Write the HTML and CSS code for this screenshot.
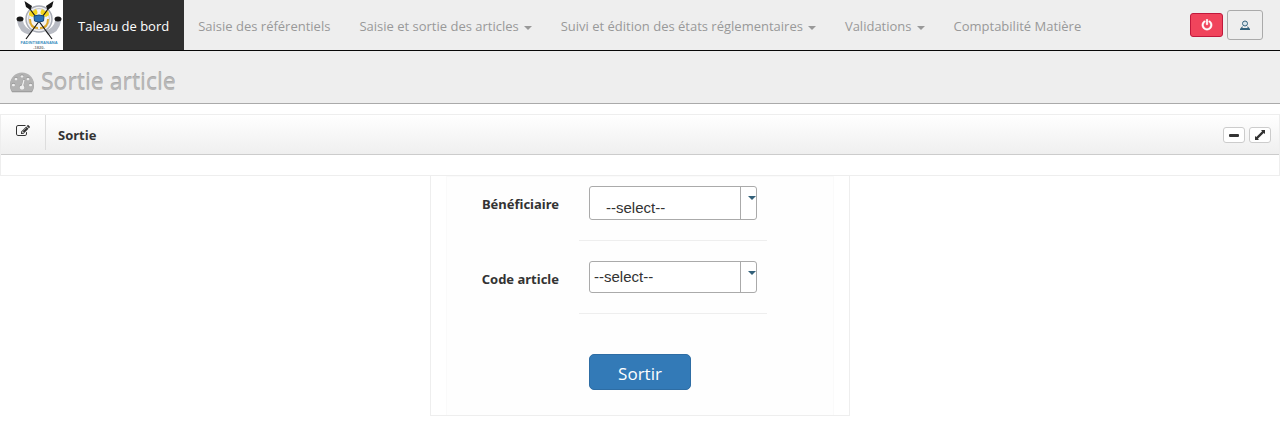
FILE: index.html
```html
<!DOCTYPE html>
<html lang="fr">
<head>
<meta charset="utf-8">
<meta name="viewport" content="width=device-width, initial-scale=1">
<title>Sortie article</title>
<link rel="stylesheet" href="styles.css">
</head>
<body>
<nav class="navbar">
  <a class="brand" href="#" aria-label="Accueil">
    <svg class="logo" viewBox="0 0 48 50" aria-hidden="true">
      <rect width="48" height="50" fill="#fff"/>
      <path d="M2 21Q4 33 15 35L18 31Q9 28 8 21ZM46 21Q44 33 33 35L30 31Q39 28 40 21Z" fill="#b9bcc4"/>
      <circle cx="24" cy="19" r="13" fill="#f2f2f4" stroke="#a9adb6" stroke-width="1.500"/>
      <circle cx="24" cy="19" r="10.500" fill="none" stroke="#c4c6cc"/>
      <path d="M14 15Q14 10 18 11L21 9Q24 13 21 15L17 17ZM34 15Q34 10 30 11L27 9Q24 13 27 15L31 17Z" fill="#f3d51f"/>
      <path d="M15 19Q15 28 23 28M33 19Q33 28 25 28" fill="none" stroke="#dfa928" stroke-width="2"/>
      <path d="M12 5L37 39M36 5L11 39" stroke="#161616" stroke-width="1.200"/>
      <path d="M9.500 1L17 6L15.500 10L11 7ZM38.500 1L31 6L32.500 10L37 7Z" fill="#161616"/>
      <ellipse cx="5" cy="19" rx="3.500" ry="2.500" fill="#1a1a1a"/>
      <ellipse cx="43" cy="19" rx="3.500" ry="2.500" fill="#1a1a1a"/>
      <path d="M19 16Q24 14 29 16L28.500 21Q24 23 19.500 21Z" fill="#2b71b6" stroke="#174777"/>
      <text x="24" y="44" class="logo-name">FADINTSERANANA</text>
      <text x="24" y="49" class="logo-year">-1820-</text>
    </svg>
  </a>
  <ul class="menu">
    <li><a class="menu-link active" href="#">Taleau de bord</a></li>
    <li><a class="menu-link" href="#">Saisie des référentiels</a></li>
    <li><a class="menu-link" href="#">Saisie et sortie des articles<span class="caret"></span></a></li>
    <li><a class="menu-link" href="#">Suivi et édition des états réglementaires<span class="caret"></span></a></li>
    <li><a class="menu-link" href="#">Validations<span class="caret"></span></a></li>
    <li><a class="menu-link" href="#">Comptabilité Matière</a></li>
  </ul>
  <div class="actions">
    <button class="btn-power" type="button" aria-label="Déconnexion">
      <svg class="icon" viewBox="0 0 1792 1792" aria-hidden="true"><path stroke="#fff" stroke-width="60" d="M1664 896q0 156-61 298t-164 245-245 164-298 61-298-61-245-164-164-245-61-298q0-182 80.500-343t226.500-270q43-32 95.500-25t83.500 50q32 42 24.500 94.500t-49.500 84.500q-98 74-151.500 181t-53.500 228q0 104 40.500 198.500t109.500 163.500 163.500 109.500 198.500 40.500 198.500-40.500 163.500-109.500 109.500-163.500 40.500-198.500q0-121-53.500-228t-151.500-181q-42-32-49.500-84.500t24.500-94.500q31-43 84-50t95 25q146 109 226.500 270t80.500 343zm-640-768v640q0 52-38 90t-90 38-90-38-38-90v-640q0-52 38-90t90-38 90 38 38 90z"/></svg>
    </button>
    <button class="btn-user" type="button" aria-label="Profil">
      <svg class="icon" viewBox="0 0 12 12" aria-hidden="true"><circle cx="6" cy="4.500" r="2.500" fill="#d9e5ec" stroke="#33627c"/><path d="M3.500 7L1 10V11H11V10L8.500 7V9H3.500Z" fill="#33627c"/></svg>
    </button>
  </div>
</nav>

<header class="page-head">
  <svg class="gauge" viewBox="0 0 1792 1792" aria-hidden="true"><path d="M384 1152q0-53-37.500-90.500t-90.500-37.500-90.500 37.500-37.500 90.500 37.500 90.500 90.500 37.500 90.500-37.500 37.500-90.500zm192-448q0-53-37.500-90.500t-90.500-37.500-90.500 37.500-37.500 90.500 37.500 90.500 90.500 37.500 90.500-37.500 37.500-90.500zm428 481l101-382q6-26-7.500-48.500t-38.500-29.500-48 6.500-30 39.500l-101 382q-60 5-107 43.500t-63 98.500q-20 77 20 146t117 89 146-20 89-117q16-60-6-117t-72-91zm660-33q0-53-37.500-90.500t-90.500-37.500-90.500 37.500-37.500 90.500 37.500 90.500 90.500 37.500 90.500-37.500 37.500-90.500zm-640-640q0-53-37.500-90.500t-90.500-37.500-90.500 37.500-37.500 90.500 37.500 90.500 90.500 37.500 90.500-37.500 37.500-90.500zm448 192q0-53-37.500-90.500t-90.500-37.500-90.500 37.500-37.500 90.500 37.500 90.500 90.500 37.500 90.500-37.500 37.500-90.500zm320 448q0 261-141 483-19 29-54 29h-1402q-35 0-54-29-141-221-141-483 0-182 71-348t191-286 286-191 348-71 348 71 286 191 191 286 71 348z"/></svg>
  <h1 class="page-title">Sortie article</h1>
</header>

<main>
  <section class="panel">
    <div class="panel-head">
      <span class="panel-icon">
        <svg class="edit" viewBox="0 0 1792 1792" aria-hidden="true"><path d="M888 1184l116-116-152-152-116 116v56h96v96h56zm440-720q-16-16-33 1l-350 350q-17 17-1 33t33-1l350-350q17-17 1-33zm80 594v190q0 119-84.500 203.500t-203.500 84.500h-832q-119 0-203.500-84.500t-84.500-203.500v-832q0-119 84.500-203.500t203.500-84.500h832q63 0 117 25 15 7 18 23 3 17-9 29l-49 49q-14 14-32 8-23-6-45-6h-832q-66 0-113 47t-47 113v832q0 66 47 113t113 47h832q66 0 113-47t47-113v-126q0-13 9-22l64-64q15-15 35-7t20 29zm-96-738l288 288-672 672h-288v-288zm444 132l-92 92-288-288 92-92q28-28 68-28t68 28l152 152q28 28 28 68t-28 68z"/></svg>
      </span>
      <h2 class="panel-title">Sortie</h2>
      <div class="panel-tools">
        <button class="tool" type="button" aria-label="Réduire"><svg class="icon" viewBox="0 0 12 12" aria-hidden="true"><rect x="1" y="5" width="10" height="3" rx="1"/></svg></button>
        <button class="tool" type="button" aria-label="Agrandir"><svg class="icon" viewBox="0 0 12 12" aria-hidden="true"><path d="M11 1V5L9.700 3.900L3.900 9.700L5 11H1V7L2.300 8.100L8.100 2.300L7 1Z"/></svg></button>
      </div>
    </div>
    <div class="panel-body"></div>
  </section>

  <form class="card">
    <div class="card-inner">
      <div class="row">
        <label class="label" for="beneficiaire">Bénéficiaire</label>
        <div class="field">
          <span class="combo"><select class="select tall" id="beneficiaire"><option>--select--</option></select></span>
        </div>
      </div>
      <div class="row">
        <label class="label" for="article">Code article</label>
        <div class="field">
          <span class="combo"><select class="select" id="article"><option>--select--</option></select></span>
        </div>
      </div>
      <div class="submit-row">
        <button class="submit" type="submit">Sortir</button>
      </div>
    </div>
  </form>
</main>
</body>
</html>
```

FILE: styles.css
```css
* { box-sizing: border-box; }

body {
  margin: 0;
  background: #fff;
  color: #333;
  font: 13px/20px "Open Sans", "Noto Sans", sans-serif;
}

.icon { display: block; width: 12px; height: 12px; fill: currentColor; }

.navbar {
  display: flex;
  padding: 0 17px 0 15px;
  background: #eee;
  border-bottom: 1px solid #080808;
}
.brand, .logo { display: block; width: 48px; height: 50px; }
.logo-name, .logo-year {
  font-family: "Liberation Sans", sans-serif;
  font-weight: bold;
  text-anchor: middle;
}
.logo-name { font-size: 4px; fill: #3f8fc0; }
.logo-year { font-size: 4px; fill: #777; }

.menu { display: flex; margin: 0; padding: 0; list-style: none; }
.menu-link {
  display: flex;
  align-items: center;
  gap: 5px;
  padding: 16px 15px 14px 14px;
  color: #999;
  text-decoration: none;
  white-space: nowrap;
}
.menu-link.active { padding: 16px 15px 14px; background: #2f2f2f; color: #fff; }
.caret {
  margin-top: 3px;
  border: 4px solid transparent;
  border-top-color: currentColor;
  border-bottom: 0;
}

.actions { display: flex; align-items: center; gap: 4px; margin-left: auto; }
.btn-power, .btn-user {
  display: flex;
  align-items: center;
  justify-content: center;
  padding: 0;
  border-radius: 3px;
}
.btn-power { width: 33px; height: 24px; background: #f0445c; border: 1px solid #c0183c; color: #fff; }
.btn-user { width: 36px; height: 30px; background: #eee; border: 1px solid #aaa; }

.page-head {
  display: flex;
  align-items: center;
  gap: 7px;
  padding: 13px 10px 5px;
  background: #eee;
  border-bottom: 1px solid #aaa;
}
.gauge { width: 24px; height: 24px; fill: #b3b3b3; filter: drop-shadow(0 1px 0 #999); }
.page-title {
  margin: 0;
  color: #b8b8b8;
  font-size: 23px;
  font-weight: 400;
  line-height: 34px;
  text-shadow: 0 -1px 0 #aaa;
}

.panel { margin-top: 10px; border: 1px solid #eee; }
.panel-head {
  display: flex;
  height: 40px;
  background: linear-gradient(#fff, #efefef);
  border-bottom: 1px solid #ccc;
}
.panel-icon { width: 45px; height: 35px; padding: 9px 15px; border-right: 1px solid #ddd; }
.edit { display: block; width: 14px; height: 14px; fill: #333; }
.panel-title { margin: 0; padding: 0 12px; font-size: 13px; line-height: 40px; }
.panel-tools { display: flex; align-items: center; gap: 4px; margin-left: auto; padding-right: 8px; }
.tool {
  display: flex;
  align-items: center;
  justify-content: center;
  width: 22px;
  height: 16px;
  padding: 0;
  background: #fff;
  border: 1px solid #ccc;
  border-radius: 3px;
  color: #333;
}
.panel-body { height: 20px; }

.card {
  max-width: 420px;
  margin: 0 auto;
  padding: 0 15px;
  border: 1px solid #eee;
  border-top: 0;
}
.card-inner { background: #fefefe; border: 1px solid #fafafa; border-bottom: 0; }
.row { display: grid; grid-template-columns: 112px 188px; column-gap: 20px; }
.label {
  padding-top: 17px;
  font-family: "Noto Sans", "Open Sans", sans-serif;
  font-weight: 700;
  text-align: right;
}
.field { height: 64px; padding: 9px 10px 0; border-bottom: 1px solid #eee; }
.row + .row .field { height: 73px; padding-top: 20px; }
.row + .row .label { padding-top: 28px; }

.combo { position: relative; display: block; }
.combo::before {
  content: "";
  position: absolute;
  top: 0;
  right: 16px;
  bottom: 0;
  border-left: 1px solid #aaa;
  pointer-events: none;
}
.combo::after {
  content: "";
  position: absolute;
  top: 10px;
  right: 1px;
  border: 4px solid transparent;
  border-top-color: #336079;
  border-bottom: 0;
  pointer-events: none;
}
.select {
  display: block;
  width: 100%;
  height: 32px;
  padding: 0 20px 0 4px;
  appearance: none;
  background: #fff;
  border: 1px solid #aaa;
  border-radius: 3px;
  color: #333;
  font: 15px/20px "Liberation Sans", Arial, sans-serif;
}
.select.tall { height: 34px; padding: 10px 20px 0 16px; }

.submit-row { padding: 40px 0 25px 142px; }
.submit {
  width: 102px;
  height: 36px;
  padding: 3px 0 0;
  background: #337ab7;
  border: 1px solid #2e6da4;
  border-radius: 5px;
  color: #fff;
  font: 17px/24px "Open Sans", "Noto Sans", sans-serif;
}
```
